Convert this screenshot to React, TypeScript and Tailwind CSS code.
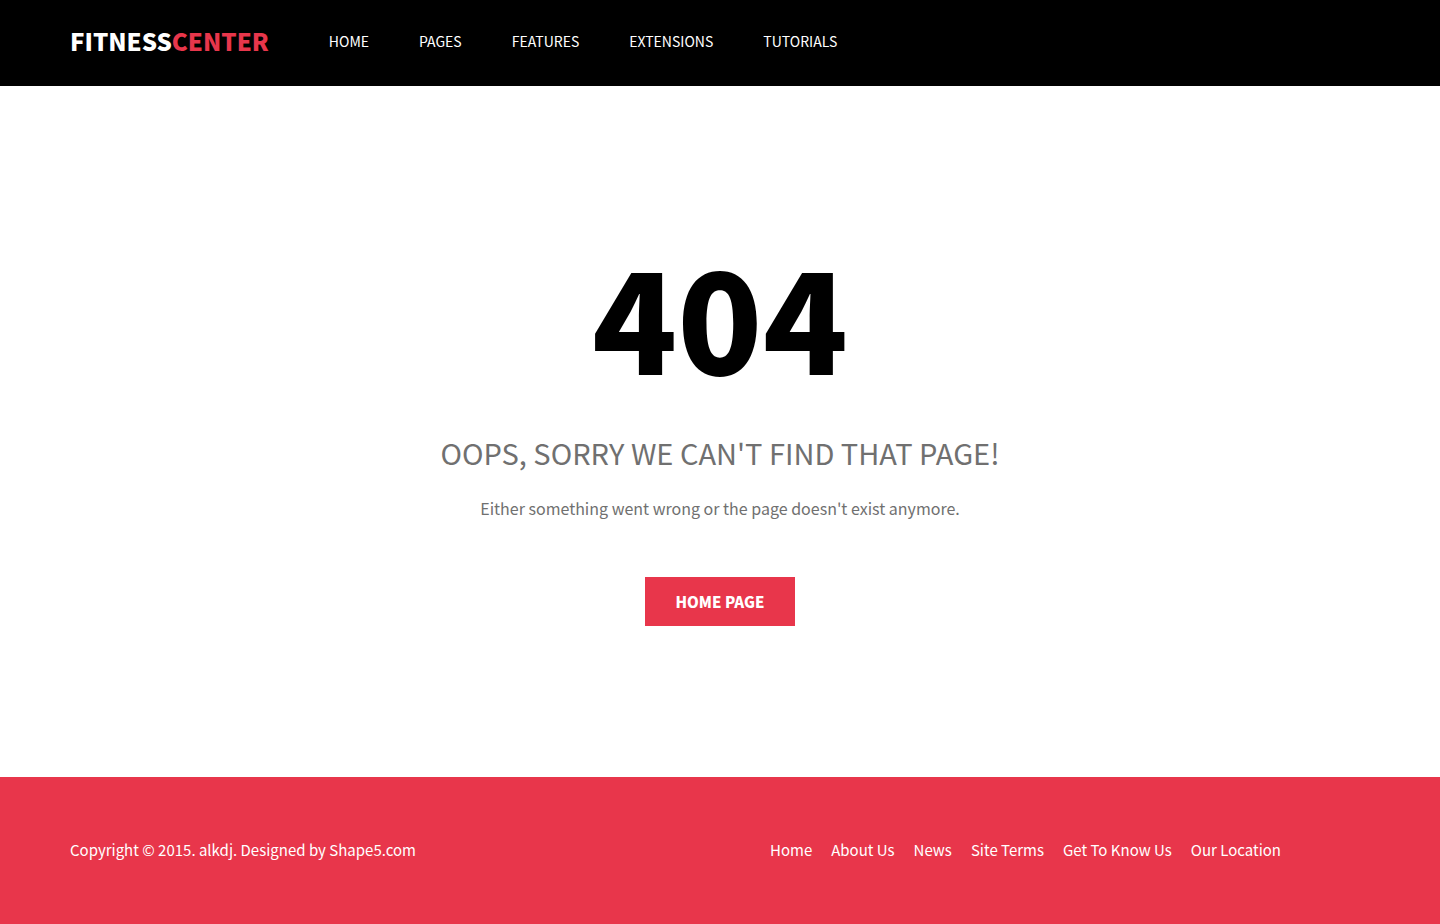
const menu = ["HOME", "PAGES", "FEATURES", "EXTENSIONS", "TUTORIALS"];
const footerLinks = ["Home", "About Us", "News", "Site Terms", "Get To Know Us", "Our Location"];

export default function App() {
  return (
    <div className="flex min-h-screen flex-col bg-white font-['Noto_Sans_CJK_SC','Noto_Sans',sans-serif]">
      <header className="bg-black px-6 text-white">
        <div className="mx-auto flex min-h-[86px] max-w-[1300px] flex-wrap items-center gap-x-[60px] pb-1">
          <a href="#" className="text-2xl font-black">
            FITNESS<span className="text-[#e8364b]">CENTER</span>
          </a>
          <nav className="flex flex-wrap gap-x-[50px] text-sm">
            {menu.map((m) => (
              <a key={m} href="#">{m}</a>
            ))}
          </nav>
        </div>
      </header>
      <main className="flex flex-1 flex-col items-center px-6 pt-[148px] pb-12 text-center text-[#707070]">
        <h1 className="text-[140px] leading-40 font-black text-black">404</h1>
        <h2 className="mt-[38px] text-[29px] leading-10">OOPS, SORRY WE CAN'T FIND THAT PAGE!</h2>
        <p className="mt-6 text-base leading-6">Either something went wrong or the page doesn't exist anymore.</p>
        <a href="#" className="mt-[57px] bg-[#e8364b] px-[30px] py-3 text-[15px] leading-[25px] font-black text-white">HOME PAGE</a>
      </main>
      <footer className="bg-[#e8364b] px-6 text-white">
        <div className="mx-auto grid min-h-[147px] max-w-[1300px] items-center text-[15px] md:grid-cols-[7fr_6fr]">
          <p>Copyright © 2015. alkdj. Designed by Shape5.com</p>
          <nav className="flex flex-wrap gap-x-[19px]">
            {footerLinks.map((l) => (
              <a key={l} href="#">{l}</a>
            ))}
          </nav>
        </div>
      </footer>
    </div>
  );
}
